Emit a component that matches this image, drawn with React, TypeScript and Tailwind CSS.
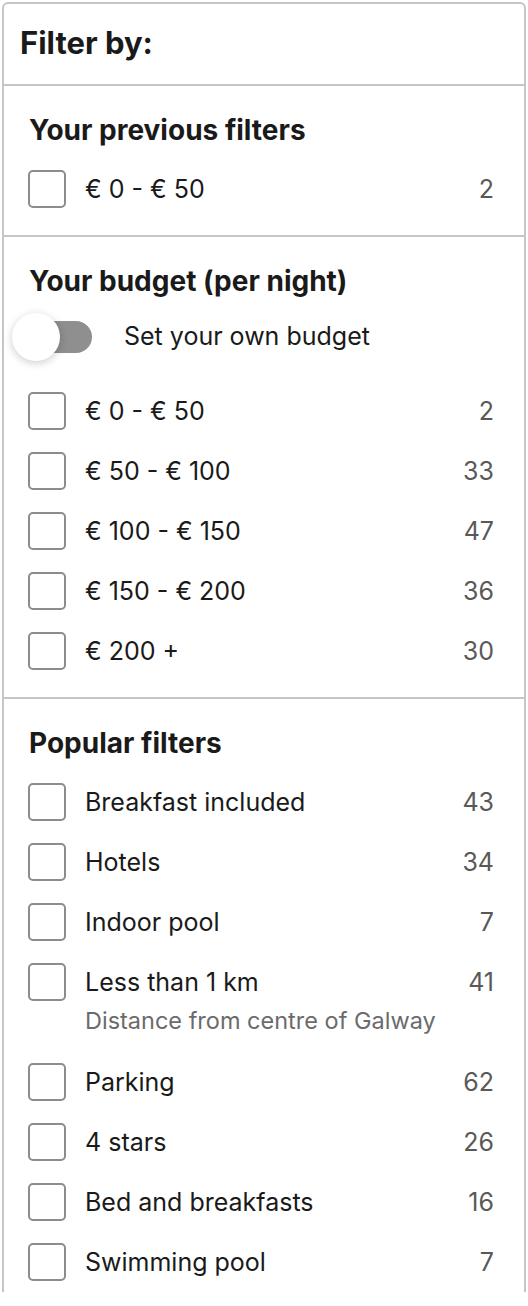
import React from 'react';

type Row = { label: string; count: number; note?: string };

const previous: Row[] = [{ label: '€ 0 - € 50', count: 2 }];

const budget: Row[] = [
  { label: '€ 0 - € 50', count: 2 },
  { label: '€ 50 - € 100', count: 33 },
  { label: '€ 100 - € 150', count: 47 },
  { label: '€ 150 - € 200', count: 36 },
  { label: '€ 200 +', count: 30 },
];

const popular: Row[] = [
  { label: 'Breakfast included', count: 43 },
  { label: 'Hotels', count: 34 },
  { label: 'Indoor pool', count: 7 },
  { label: 'Less than 1 km', count: 41, note: 'Distance from centre of Galway' },
  { label: 'Parking', count: 62 },
  { label: '4 stars', count: 26 },
  { label: 'Bed and breakfasts', count: 16 },
  { label: 'Swimming pool', count: 7 },
];

function FilterRow({ row }: { row: Row }) {
  return (
    <label className="flex items-start py-[11px] cursor-pointer">
      <span className="w-[38px] h-[38px] shrink-0 rounded-[5px] border-2 border-[#8c8c8c] bg-white" />
      <span className="flex-1 pl-[19px]">
        <span className="block text-[25px] leading-[38px] text-[#1a1a1a]">{row.label}</span>
        {row.note && (
          <span className="block text-[23.5px] leading-[40px] text-[#6b6b6b]">{row.note}</span>
        )}
      </span>
      <span className="text-[25px] leading-[38px] text-[#595959]">{row.count}</span>
    </label>
  );
}

function Section({ title, rows, children, last }: { title: string; rows: Row[]; children?: React.ReactNode; last?: boolean }) {
  return (
    <div className={last ? 'pl-[24px] pr-[30px] pt-[26px]' : 'pl-[24px] pr-[30px] pt-[26px] pb-[16px] border-b-2 border-[#c6c6c6]'}>
      <h3 className="pl-[1px] text-[28px] leading-[36px] font-bold text-[#1a1a1a]">{title}</h3>
      {children}
      <div className={children ? 'mt-[20px]' : 'mt-[11px]'}>
        {rows.map((r) => (
          <FilterRow key={r.label} row={r} />
        ))}
      </div>
    </div>
  );
}

export default function App() {
  return (
    <div className="w-[528px] h-[1306px] overflow-hidden bg-white" style={{ fontFamily: 'Inter, "Liberation Sans", sans-serif' }}>
      <div className="ml-[2px] mt-[2px] w-[524px] border-2 border-b-0 border-[#c6c6c6] rounded-t-[6px]">
        <div className="h-[82px] flex items-center pl-[16px] border-b-2 border-[#c6c6c6]">
          <h2 className="text-[31px] font-bold text-[#1a1a1a] pb-[2px]">Filter by:</h2>
        </div>

        <Section title="Your previous filters" rows={previous} />

        <Section title="Your budget (per night)" rows={budget}>
          <div className="mt-[14px] flex items-center h-[48px]">
            <div className="relative w-[64px] h-[32px] rounded-full bg-[#8f8f8f]">
              <span className="absolute -left-[16px] -top-[8px] w-[48px] h-[48px] rounded-full bg-white shadow-[0_2px_8px_rgba(0,0,0,0.2)]" />
            </div>
            <span className="pl-[32px] text-[25px] text-[#1a1a1a]">Set your own budget</span>
          </div>
        </Section>

        <Section title="Popular filters" rows={popular} last />
      </div>
    </div>
  );
}
